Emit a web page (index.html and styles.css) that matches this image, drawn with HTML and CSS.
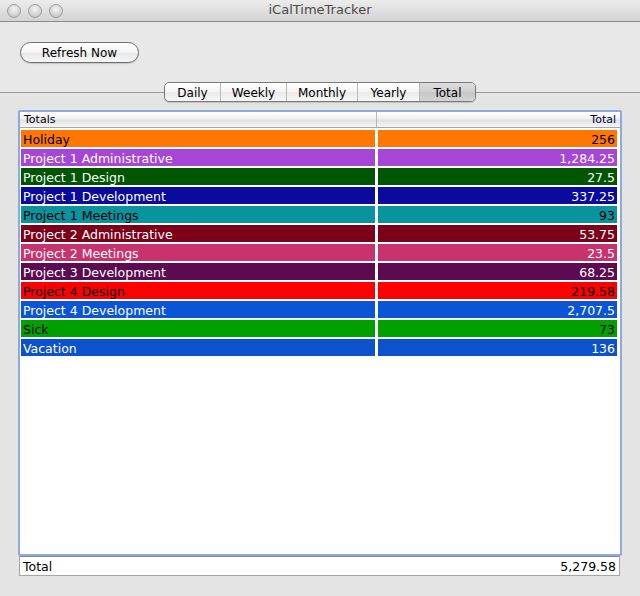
FILE: index.html
```html
<!DOCTYPE html>
<html>
<head>
<meta charset="utf-8">
<link rel="stylesheet" href="styles.css">
</head>
<body>
<div class="window">
  <div class="titlebar">
    <div class="lights">
      <span class="light"></span><span class="light"></span><span class="light"></span>
    </div>
    <div class="title">iCalTimeTracker</div>
  </div>
  <div class="toolbar">
    <button class="btn">Refresh Now</button>
  </div>
  <div class="segwrap">
    <div class="seg">
      <span class="segitem w-daily">Daily</span>
      <span class="segitem w-weekly">Weekly</span>
      <span class="segitem w-monthly">Monthly</span>
      <span class="segitem w-yearly">Yearly</span>
      <span class="segitem w-total sel">Total</span>
    </div>
  </div>
  <div class="pane">
    <div class="table">
      <div class="thead">
        <div class="th th-left">Totals</div>
        <div class="th th-right">Total</div>
      </div>
      <div class="tbody">
        <div class="row c-orange dark"><div class="cell">Holiday</div><div class="cell num">256</div></div>
        <div class="row c-purple"><div class="cell">Project 1 Administrative</div><div class="cell num">1,284.25</div></div>
        <div class="row c-dgreen"><div class="cell">Project 1 Design</div><div class="cell num">27.5</div></div>
        <div class="row c-navy"><div class="cell">Project 1 Development</div><div class="cell num">337.25</div></div>
        <div class="row c-teal dark"><div class="cell">Project 1 Meetings</div><div class="cell num">93</div></div>
        <div class="row c-maroon"><div class="cell">Project 2 Administrative</div><div class="cell num">53.75</div></div>
        <div class="row c-pink"><div class="cell">Project 2 Meetings</div><div class="cell num">23.5</div></div>
        <div class="row c-plum"><div class="cell">Project 3 Development</div><div class="cell num">68.25</div></div>
        <div class="row c-red dark"><div class="cell">Project 4 Design</div><div class="cell num">219.58</div></div>
        <div class="row c-blue"><div class="cell">Project 4 Development</div><div class="cell num">2,707.5</div></div>
        <div class="row c-green dark"><div class="cell">Sick</div><div class="cell num">73</div></div>
        <div class="row c-blue2"><div class="cell">Vacation</div><div class="cell num">136</div></div>
      </div>
    </div>
    <div class="footer">
      <span>Total</span>
      <span>5,279.58</span>
    </div>
  </div>
</div>
</body>
</html>
```

FILE: styles.css
```css
* { box-sizing: border-box; }
html, body { margin: 0; padding: 0; }
body {
  width: 640px;
  height: 596px;
  overflow: hidden;
  background: #e8e8e8;
  font-family: "DejaVu Sans", "Liberation Sans", sans-serif;
  font-size: 12px;
  color: #000;
}
.window {
  display: flex;
  flex-direction: column;
  height: 596px;
}
.titlebar {
  height: 22px;
  border-bottom: 1px solid #8a8a8a;
  background: linear-gradient(#ececec, #d3d3d3);
  display: flex;
  align-items: center;
  position: relative;
}
.lights {
  display: flex;
  gap: 7px;
  padding-left: 7px;
}
.light {
  width: 14px;
  height: 14px;
  border-radius: 50%;
  background: radial-gradient(circle at 50% 35%, #f4f4f4, #cdcdcd 70%, #b5b5b5);
  border: 1px solid #9d9d9d;
}
.title {
  position: absolute;
  left: 0;
  right: 0;
  top: 2px;
  text-align: center;
  font-size: 13px;
  color: #4a4a4a;
}
.toolbar {
  padding: 20px 0 0 20px;
  display: flex;
}
.btn {
  width: 119px;
  height: 21px;
  border: 1px solid #6e6e6e;
  border-radius: 11px;
  background: linear-gradient(#ffffff, #f3f3f3 50%, #e6e6e6 51%, #f8f8f8);
  font-family: "DejaVu Sans", "Liberation Sans", sans-serif;
  font-size: 12px;
  color: #000;
  padding: 0;
  box-shadow: 0 1px 1px rgba(0,0,0,0.15);
}
.segwrap {
  display: flex;
  justify-content: center;
  margin-top: 19px;
  position: relative;
  z-index: 1;
}
.seg {
  display: flex;
  height: 20px;
  border: 1px solid #7a7a7a;
  border-radius: 5px;
  background: linear-gradient(#ffffff, #f4f4f4 50%, #e9e9e9 51%, #f7f7f7);
  overflow: hidden;
  box-shadow: 0 1px 1px rgba(0,0,0,0.15);
}
.segitem {
  display: flex;
  align-items: center;
  justify-content: center;
  border-left: 1px solid #b8b8b8;
  font-size: 12px;
  padding-top: 1px;
}
.segitem:first-child { border-left: none; }
.w-daily { width: 55px; }
.w-weekly { width: 66px; }
.w-monthly { width: 71px; }
.w-yearly { width: 62px; }
.w-total { width: 56px; }
.segitem.sel {
  background: linear-gradient(#dcdcdc, #d0d0d0 50%, #c6c6c6 51%, #d4d4d4);
}
.pane {
  margin-top: -10px;
  border-top: 1px solid #9a9a9a;
  background: #e4e4e4;
  flex: 1;
  padding: 17px 18px 0 18px;
  display: flex;
  flex-direction: column;
}
.table {
  height: 446px;
  border: 2px solid #8cabd9;
  border-radius: 2px;
  background: #fff;
  display: flex;
  flex-direction: column;
}
.thead {
  display: grid;
  grid-template-columns: 356px 1fr;
  height: 16px;
  border-bottom: 1px solid #a5a5a5;
  background: linear-gradient(#ffffff, #f0f0f0 45%, #e2e2e2 55%, #f5f5f5);
  font-size: 11px;
}
.th {
  display: flex;
  align-items: center;
  padding: 0 4px;
  line-height: 15px;
}
.th-right {
  justify-content: flex-end;
  border-left: 1px solid #b8b8b8;
  color: #000033;
}
.tbody {
  padding: 2px 3px 0 1px;
  display: flex;
  flex-direction: column;
  gap: 2px;
}
.row {
  display: grid;
  grid-template-columns: 354px 239px;
  column-gap: 3px;
  height: 17px;
  color: #fff;
  font-size: 12.5px;
}
.row.dark { color: #000; }
.cell {
  padding: 1px 2px 0 2px;
  line-height: 17px;
  white-space: nowrap;
  overflow: hidden;
}
.cell.num { text-align: right; }
.c-orange .cell { background: #ff7700; }
.c-purple .cell { background: #a646d6; }
.c-dgreen .cell { background: #005600; }
.c-navy .cell { background: #0a0a9c; }
.c-teal .cell { background: #08939f; }
.c-maroon .cell { background: #7b0018; }
.c-pink .cell { background: #c8336e; }
.c-plum .cell { background: #5c0b50; }
.c-red .cell { background: #ff0000; }
.c-blue .cell { background: #0a55d6; }
.c-green .cell { background: #00a000; }
.c-blue2 .cell { background: #0b52cc; }
.footer {
  margin: 0 2px 0 1px;
  height: 20px;
  background: #fff;
  border: 1px solid #a5a5a5;
  border-top-color: #8a8a8a;
  display: flex;
  justify-content: space-between;
  align-items: center;
  padding: 0 3px 0 3px;
  font-size: 12.5px;
}
```
